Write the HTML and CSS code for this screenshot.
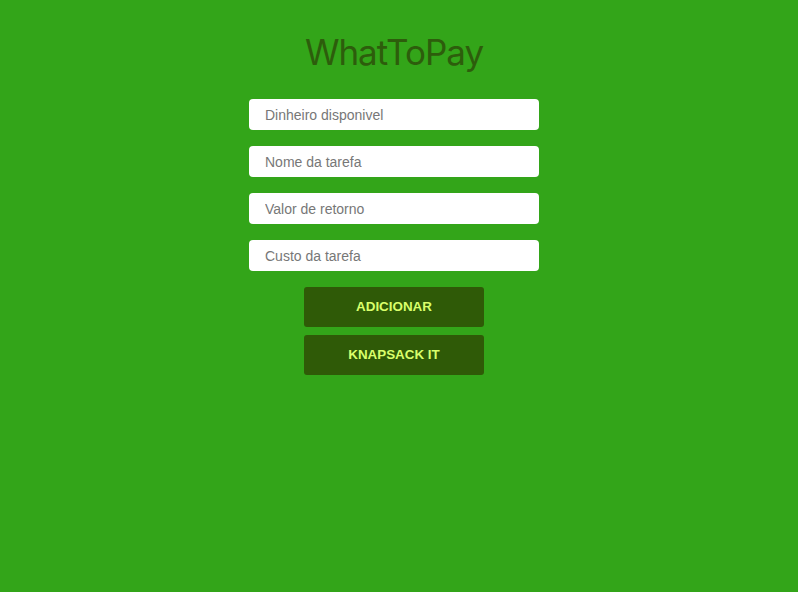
FILE: index.html
```html
<!DOCTYPE html>
<html>
<head>
<meta charset="utf-8">
<link rel="stylesheet" href="styles.css">
</head>
<body>
<main class="app">
  <h1 class="title">WhatToPay</h1>
  <form class="form">
    <input class="field" type="text" placeholder="Dinheiro disponivel">
    <input class="field" type="text" placeholder="Nome da tarefa">
    <input class="field" type="text" placeholder="Valor de retorno">
    <input class="field" type="text" placeholder="Custo da tarefa">
    <div class="actions">
      <button class="btn" type="button">ADICIONAR</button>
      <button class="btn" type="button">KNAPSACK IT</button>
    </div>
  </form>
</main>
</body>
</html>
```
FILE: styles.css
```css
html, body {
  margin: 0;
  padding: 0;
  height: 100%;
}
body {
  background: #33a519;
  font-family: "Liberation Sans", Arial, sans-serif;
}
.app {
  display: flex;
  flex-direction: column;
  align-items: center;
  padding-top: 32px;
  padding-right: 10px;
}
.title {
  margin: 0;
  font-family: "Inter", "Noto Sans", sans-serif;
  font-weight: 400;
  font-size: 35px;
  letter-spacing: -1px;
  line-height: 40px;
  color: #2d5d0c;
}
.form {
  margin-top: 27px;
  display: flex;
  flex-direction: column;
  align-items: center;
  gap: 16px;
}
.field {
  box-sizing: border-box;
  width: 290px;
  height: 31px;
  border: none;
  border-radius: 4px;
  background: #fff;
  padding: 0 16px;
  font-family: "Liberation Sans", Arial, sans-serif;
  font-size: 14px;
  color: #333;
  outline: none;
}
.field::placeholder {
  color: #777777;
}
.actions {
  display: flex;
  flex-direction: column;
  gap: 8px;
}
.btn {
  width: 180px;
  height: 40px;
  border: none;
  border-radius: 3px;
  background: #2f5a07;
  color: #d9ff6b;
  font-family: "Liberation Sans", Arial, sans-serif;
  font-weight: 700;
  font-size: 13.4px;
  padding-bottom: 2px;
  cursor: pointer;
}
```
